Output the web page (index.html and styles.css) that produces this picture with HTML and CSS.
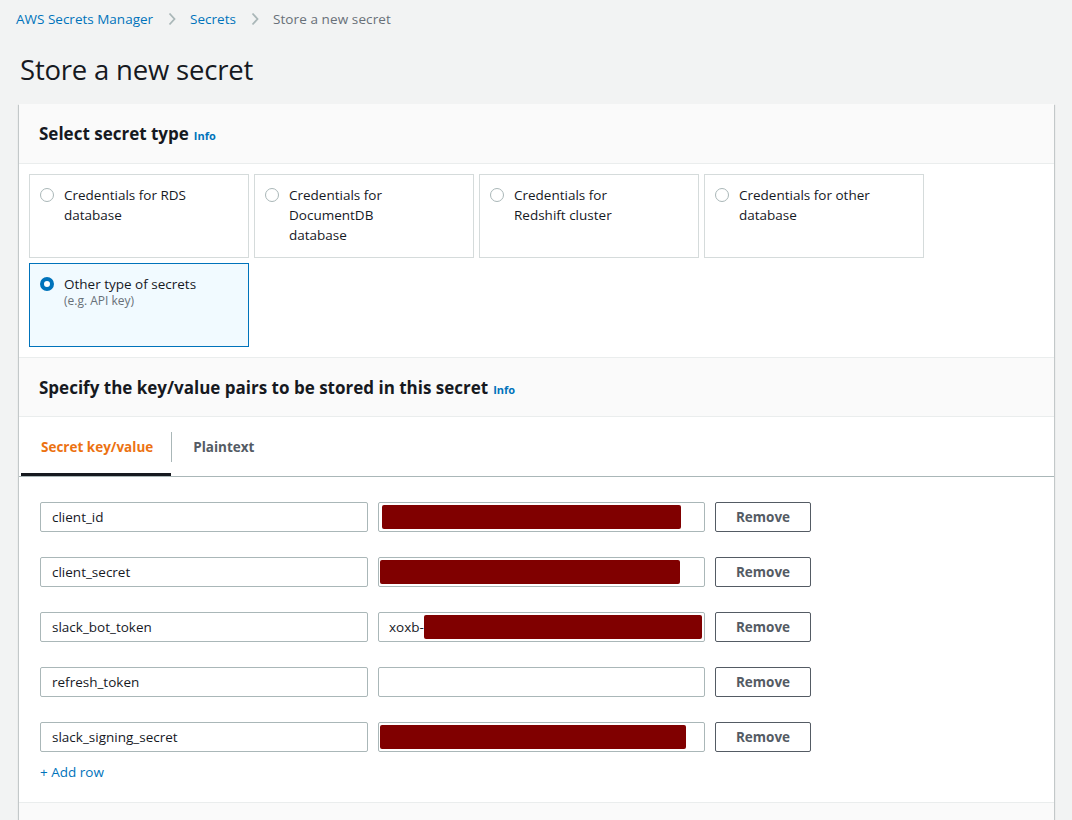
FILE: index.html
```html
<!DOCTYPE html>
<html lang="en">
<head>
<meta charset="utf-8">
<title>Store a new secret</title>
<link rel="stylesheet" href="styles.css">
</head>
<body>
<nav class="breadcrumbs">
  <a class="crumb-link" href="#">AWS Secrets Manager</a>
  <svg class="chev" width="8" height="14" viewBox="0 0 8 14"><polyline points="1.5,1.5 6.5,7 1.5,12.5" fill="none" stroke="#aab7b8" stroke-width="1.8"/></svg>
  <a class="crumb-link" href="#">Secrets</a>
  <svg class="chev" width="8" height="14" viewBox="0 0 8 14"><polyline points="1.5,1.5 6.5,7 1.5,12.5" fill="none" stroke="#aab7b8" stroke-width="1.8"/></svg>
  <span class="crumb-current">Store a new secret</span>
</nav>
<h1 class="page-title">Store a new secret</h1>

<div class="container">
  <div class="section-header first">
    <h2 class="section-title">Select secret type</h2><a class="info" href="#">Info</a>
  </div>
  <div class="tiles">
    <div class="tile"><span class="radio"></span><div class="tile-text"><div class="tile-label">Credentials for RDS database</div></div></div>
    <div class="tile"><span class="radio"></span><div class="tile-text"><div class="tile-label">Credentials for DocumentDB database</div></div></div>
    <div class="tile"><span class="radio"></span><div class="tile-text"><div class="tile-label">Credentials for Redshift cluster</div></div></div>
    <div class="tile"><span class="radio"></span><div class="tile-text"><div class="tile-label">Credentials for other database</div></div></div>
    <div class="tile selected"><span class="radio checked"></span><div class="tile-text"><div class="tile-label">Other type of secrets</div><div class="tile-desc">(e.g. API key)</div></div></div>
  </div>

  <div class="section-header second">
    <h2 class="section-title">Specify the key/value pairs to be stored in this secret</h2><a class="info" href="#">Info</a>
  </div>
  <div class="tabs">
    <div class="tab active">Secret key/value</div>
    <div class="tab-divider"></div>
    <div class="tab">Plaintext</div>
  </div>
  <div class="kv">
    <div class="kv-row">
      <div class="field">client_id</div>
      <div class="field value"><span class="redact" style="width:299px;margin-left:3px"></span></div>
      <button class="btn">Remove</button>
    </div>
    <div class="kv-row">
      <div class="field">client_secret</div>
      <div class="field value"><span class="redact" style="width:300px;margin-left:1px"></span></div>
      <button class="btn">Remove</button>
    </div>
    <div class="kv-row">
      <div class="field">slack_bot_token</div>
      <div class="field value text"><span class="val-text">xoxb-</span><span class="redact" style="width:278px"></span></div>
      <button class="btn">Remove</button>
    </div>
    <div class="kv-row">
      <div class="field">refresh_token</div>
      <div class="field value"></div>
      <button class="btn">Remove</button>
    </div>
    <div class="kv-row">
      <div class="field">slack_signing_secret</div>
      <div class="field value"><span class="redact" style="width:306px;margin-left:1px"></span></div>
      <button class="btn">Remove</button>
    </div>
    <a class="add-row" href="#">+ Add row</a>
  </div>
  <div class="section-footer"></div>
</div>
</body>
</html>
```

FILE: styles.css
```css
* { box-sizing: border-box; }
html, body { margin: 0; padding: 0; }
body {
  background: #f2f3f3;
  font-family: "Open Sans", "Noto Sans", sans-serif;
  font-size: 13.5px;
  color: #16191f;
  height: 820px;
  overflow: hidden;
}
a { text-decoration: none; }

.breadcrumbs {
  display: flex;
  align-items: center;
  height: 38px;
  padding: 0 16px;
  font-size: 13.5px;
}
.crumb-link { color: #0073bb; }
.chev { margin: 0 14px 0 15px; }
.crumb-current { color: #687078; letter-spacing: 0.1px; }

.page-title {
  margin: 12px 0 0 20px;
  font-size: 27.5px;
  font-weight: 400;
  line-height: 40px;
  color: #16191f;
  letter-spacing: -0.2px;
}

.container {
  margin: 14px 0 0 19px;
  width: 1035px;
  background: #fff;
  box-shadow: 0 1px 1px 0 rgba(0,28,36,0.3), 1px 1px 1px 0 rgba(0,28,36,0.15), -1px 1px 1px 0 rgba(0,28,36,0.15);
}

.section-header {
  display: flex;
  align-items: baseline;
  background: #fafafa;
  padding: 0 20px;
  border-bottom: 1px solid #eaeded;
}
.section-header.first { height: 60px; padding-top: 18px; }
.section-header.second { height: 60px; padding-top: 18px; border-top: 1px solid #eaeded; }
.section-title {
  margin: 0;
  font-size: 17px;
  font-weight: 700;
  line-height: 24px;
  color: #16191f;
}
.info {
  margin-left: 5px;
  font-size: 11px;
  font-weight: 700;
  color: #0073bb;
}

.tiles {
  display: grid;
  grid-template-columns: repeat(4, 220px);
  grid-auto-rows: 84px;
  gap: 5px;
  padding: 10px;
}
.tile {
  display: flex;
  border: 1px solid #d5dbdb;
  padding: 10px;
  background: #fff;
}
.tile.selected {
  border-color: #0073bb;
  background: #f1faff;
}
.radio {
  flex: none;
  width: 14px;
  height: 14px;
  margin-top: 3px;
  border-radius: 50%;
  border: 1.5px solid #aab7b8;
  background: #fff;
}
.radio.checked {
  border: 4.5px solid #0073bb;
}
.tile-text { margin-left: 10px; max-width: 145px; }
.tile-label {
  font-size: 13.5px;
  line-height: 20px;
  color: #16191f;
}
.tile-desc {
  font-size: 12px;
  line-height: 14px;
  color: #687078;
}

.tabs {
  display: flex;
  align-items: center;
  height: 60px;
  padding-left: 2px;
  border-bottom: 1px solid #aab7b8;
}
.tab {
  height: 59px;
  display: flex;
  align-items: center;
  padding: 0 20px;
  font-size: 13.5px;
  font-weight: 700;
  color: #545b64;
}
.tab.active {
  color: #ec7211;
  border-bottom: 3px solid #16191f;
  padding-top: 3px;
  padding-right: 18px;
}
.tab-divider {
  width: 1px;
  height: 30px;
  background: #aab7b8;
  margin-right: 1px;
}

.kv {
  display: flex;
  flex-direction: column;
  padding: 25px 21px 20px;
}
.kv-row {
  display: flex;
  gap: 10px;
  margin-bottom: 25px;
}
.kv-row:nth-last-of-type(1) { margin-bottom: 0; }
.field {
  width: 328px;
  height: 30px;
  border: 1px solid #aab7b8;
  border-radius: 2px;
  padding: 0 11px;
  display: flex;
  align-items: center;
  font-size: 13.5px;
  color: #16191f;
  background: #fff;
}
.field.value {
  width: 327px;
  padding: 0;
}
.field.value.text { padding-left: 10px; }
.redact {
  display: block;
  height: 24px;
  background: #800000;
  border-radius: 2px;
}
.btn {
  width: 96px;
  height: 30px;
  border: 1px solid #545b64;
  border-radius: 2px;
  background: #fff;
  font-family: inherit;
  font-size: 13.5px;
  font-weight: 700;
  color: #545b64;
  padding: 0;
}
.add-row {
  margin-top: 10px;
  line-height: 20px;
  color: #0073bb;
  font-size: 13.5px;
  align-self: flex-start;
}
.section-footer {
  height: 40px;
  border-top: 1px solid #eaeded;
  background: #fafafa;
}
```
